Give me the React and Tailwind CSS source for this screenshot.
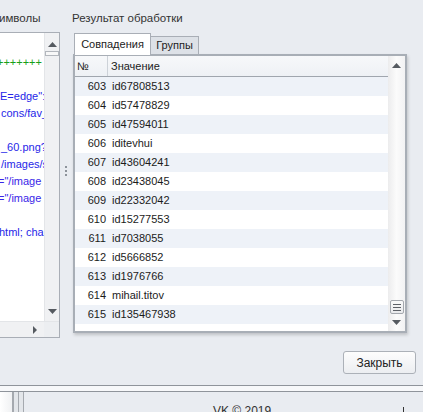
import React from 'react';

const rows = [
  [603, 'id67808513'],
  [604, 'id57478829'],
  [605, 'id47594011'],
  [606, 'iditevhui'],
  [607, 'id43604241'],
  [608, 'id23438045'],
  [609, 'id22332042'],
  [610, 'id15277553'],
  [611, 'id7038055'],
  [612, 'id5666852'],
  [613, 'id1976766'],
  [614, 'mihail.titov'],
  [615, 'id135467938'],
];

const codeLines = [
  { text: '+++++++', color: 'text-[#18a018]', shift: '-ml-[3px]' },
  { text: '' },
  { text: 'E=edge":', color: 'text-[#2626e8]', shift: 'ml-0' },
  { text: 'cons/fav_', color: 'text-[#2626e8]', shift: 'ml-[1px]' },
  { text: '' },
  { text: '_60.png?', color: 'text-[#2626e8]', shift: 'ml-[1px]' },
  { text: '/images/s', color: 'text-[#2626e8]', shift: 'ml-[1px]' },
  { text: '="/image', color: 'text-[#3a26e8]', shift: '-ml-[2px]' },
  { text: '="/image', color: 'text-[#3a26e8]', shift: '-ml-[2px]' },
  { text: '' },
  { text: 'html; cha', color: 'text-[#2626e8]', shift: '-ml-[1px]' },
];

const UpArrow = () => (
  <svg width="9" height="5" viewBox="0 0 9 5" className="block">
    <path d="M4.5 0 L9 5 L0 5 Z" fill="#555a60" />
  </svg>
);

const DownArrow = () => (
  <svg width="9" height="5" viewBox="0 0 9 5" className="block">
    <path d="M0 0 L9 0 L4.5 5 Z" fill="#555a60" />
  </svg>
);

const App = () => {
  return (
    <div className="w-[423px] h-[412px] overflow-hidden bg-[#e9ecf1] flex flex-col font-['Liberation_Sans','Noto_Sans',sans-serif] text-[11px] text-[#1b1b1b]">
      <div className="h-[385px] flex flex-row shrink-0">
        {/* left panel */}
        <div className="w-[60px] flex flex-col shrink-0">
          <div className="h-[32px] pt-[11px] text-[11.5px] leading-[14px] text-[#333] whitespace-nowrap overflow-hidden">
            <span className="-ml-[1px]">имволы</span>
          </div>
          <div className="h-[306px] bg-white border-t border-r border-b border-[#a9aeb6] flex flex-col">
            <div className="flex-1 flex flex-row min-h-0">
              <div className="flex-1 overflow-hidden pt-[21px] min-w-0">
                {codeLines.map((l, i) => (
                  <div key={i} className={`h-[17px] leading-[17px] text-[11px] whitespace-nowrap ${l.color || ''} ${l.shift || ''}`}>
                    {l.text}
                  </div>
                ))}
              </div>
              <div className="w-[15px] bg-[#f0f1f3] border-l border-[#e3e5e8] flex flex-col items-center pt-[9px]">
                <UpArrow />
                <div className="mt-[4px] w-[14px] h-[5px] border border-[#b3b7bd] bg-[#f8f8f8]" />
                <div className="flex-1" />
                <div className="mb-[7px]">
                  <DownArrow />
                </div>
              </div>
            </div>
            <div className="h-[16px] flex flex-row bg-[#f0f1f3] border-t border-[#e3e5e8]">
              <div className="flex-1 flex justify-end items-center pr-[7px]">
                <svg width="4" height="8" viewBox="0 0 4 8">
                  <path d="M0 0 L4 4 L0 8 Z" fill="#555a60" />
                </svg>
              </div>
              <div className="w-[15px] bg-[#eceef1]" />
            </div>
          </div>
        </div>

        {/* splitter */}
        <div className="w-[12px] shrink-0 flex flex-col items-center pt-[166px] gap-[2px]">
          <div className="w-[2px] h-[2px] bg-[#8d939b]" />
          <div className="w-[2px] h-[2px] bg-[#8d939b]" />
          <div className="w-[2px] h-[2px] bg-[#8d939b]" />
        </div>

        {/* right side */}
        <div className="flex-1 flex flex-col">
          <div className="h-[33px] pt-[11px] text-[11.5px] leading-[14px] text-[#333] whitespace-nowrap">
            Результат обработки
          </div>
          <div className="flex flex-row items-end ml-[2px] h-[21px] relative z-10">
            <div className="w-[77px] h-[22px] bg-white border border-b-0 border-[#a9aeb6] flex items-center justify-center text-[11px] text-[#222] -mb-px pb-[1px]">
              Совпадения
            </div>
            <div className="w-[48px] h-[18px] bg-[#dde1e7] border border-l-0 border-b-0 border-[#a9aeb6] flex items-center justify-center text-[11px] text-[#222]">
              Группы
            </div>
          </div>
          <div className="ml-[1px] w-[334px] h-[279px] border-2 border-[#a8aeb6] bg-white flex flex-row shadow-[1px_2px_3px_rgba(0,0,0,0.18)]">
            <div className="flex-1 flex flex-col">
              <div className="h-[21px] flex flex-row border-b border-[#a0a6ae] bg-gradient-to-b from-[#f7f8fa] to-[#eef1f5] leading-[20px]">
                <div className="w-[33px] pl-[2px] border-r border-[#cdd2d8]">№</div>
                <div className="pl-[3px]">Значение</div>
              </div>
              {rows.map(([n, v], i) => (
                <div key={n} className={`h-[19px] leading-[19px] flex flex-row ${i % 2 === 0 ? 'bg-[#eef2f8]' : 'bg-white'}`}>
                  <div className="w-[33px] text-right pr-[2px]">{n}</div>
                  <div className="pl-[4px]">{v}</div>
                </div>
              ))}
            </div>
            <div className="w-[17px] bg-gradient-to-r from-[#ececed] via-[#fbfbfb] to-[#f2f2f3] flex flex-col items-center pt-[7px] pb-[6px]">
              <UpArrow />
              <div className="flex-1" />
              <div className="w-[14px] h-[14px] rounded-[2px] border border-[#a4a8ae] bg-gradient-to-b from-[#fafafa] to-[#e9eaec] flex flex-col items-center justify-center gap-[2px]">
                <div className="w-[8px] h-px bg-[#5d6167]" />
                <div className="w-[8px] h-px bg-[#5d6167]" />
                <div className="w-[8px] h-px bg-[#5d6167]" />
              </div>
              <div className="mt-[6px]">
                <DownArrow />
              </div>
            </div>
          </div>
          <div className="flex justify-end pr-[7px] mt-[18px]">
            <button className="w-[73px] h-[23px] rounded-[3px] border border-[#acb1b8] bg-gradient-to-b from-[#fdfdfd] to-[#eceef1] text-[12px] text-[#222] flex items-center justify-center">
              Закрыть
            </button>
          </div>
        </div>
      </div>

      {/* bottom bars */}
      <div className="h-[7px] border-t border-b border-[#8f949b] bg-[#f7f8fa] shrink-0" />
      <div className="flex-1 flex flex-row relative">
        <div className="w-[12px] bg-gradient-to-r from-white to-[#f0f1f3]" />
        <div className="w-[2px] bg-[#a5a9af]" />
        <div className="w-[4px] bg-[#e3e6ea]" />
        <div className="w-[1px] bg-[#a5a9af]" />
        <div className="w-[4px] bg-[#e3e6ea]" />
        <div className="w-[1px] bg-[#a5a9af]" />
        <div className="flex-1 flex flex-row pt-[12px] pl-[189px] text-[12px] leading-[14px] text-[#333]">
          <span>VK © 2019</span>
          <div className="flex-1" />
          <div className="w-px h-[6px] bg-[#333] mr-[19px] mt-[3px]" />
        </div>
      </div>
    </div>
  );
};

export default App;
